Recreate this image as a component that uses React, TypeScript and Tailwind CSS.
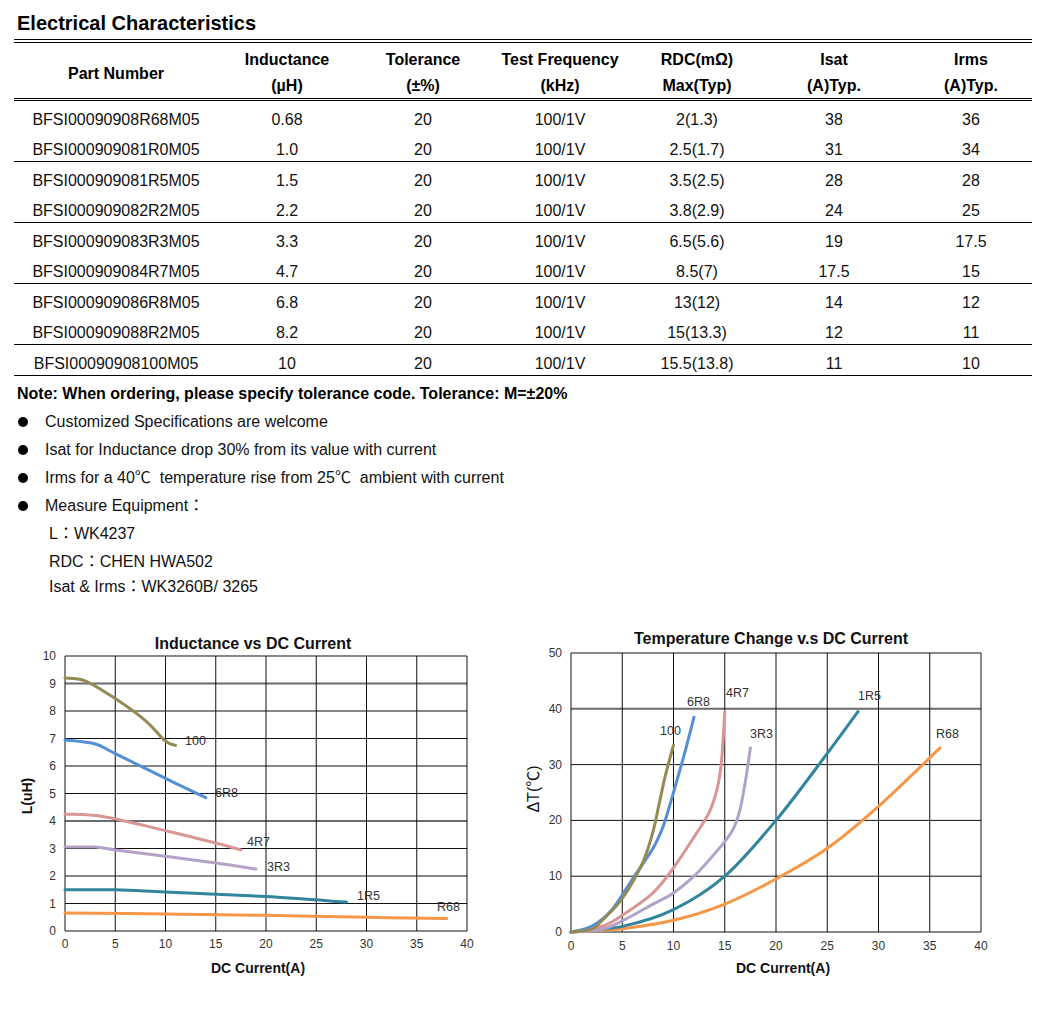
import React from 'react';

type Pt = [number, number];
type Series = { color: string; pts: Pt[]; label: string; lx: number; ly: number };

const rows = [
  ['BFSI00090908R68M05', '0.68', '20', '100/1V', '2(1.3)', '38', '36'],
  ['BFSI000909081R0M05', '1.0', '20', '100/1V', '2.5(1.7)', '31', '34'],
  ['BFSI000909081R5M05', '1.5', '20', '100/1V', '3.5(2.5)', '28', '28'],
  ['BFSI000909082R2M05', '2.2', '20', '100/1V', '3.8(2.9)', '24', '25'],
  ['BFSI000909083R3M05', '3.3', '20', '100/1V', '6.5(5.6)', '19', '17.5'],
  ['BFSI000909084R7M05', '4.7', '20', '100/1V', '8.5(7)', '17.5', '15'],
  ['BFSI000909086R8M05', '6.8', '20', '100/1V', '13(12)', '14', '12'],
  ['BFSI000909088R2M05', '8.2', '20', '100/1V', '15(13.3)', '12', '11'],
  ['BFSI00090908100M05', '10', '20', '100/1V', '15.5(13.8)', '11', '10'],
];

const gridCols = 'grid grid-cols-[204px_138px_134px_140px_134px_140px_128px]';

// inductance vs current
const lSeries: Series[] = [
  { color: '#948a54', label: '100', lx: 185, ly: 117, pts: [[0, 9.2], [2, 9.1], [5, 8.45], [8, 7.65], [10, 6.9], [11, 6.75]] },
  { color: '#558ed5', label: '6R8', lx: 215, ly: 169, pts: [[0, 6.95], [3, 6.8], [5, 6.45], [10, 5.55], [14, 4.85]] },
  { color: '#d99694', label: '4R7', lx: 247, ly: 218, pts: [[0, 4.25], [4, 4.15], [10, 3.65], [15, 3.2], [17.5, 2.95]] },
  { color: '#b3a2c7', label: '3R3', lx: 267, ly: 243, pts: [[0, 3.05], [3, 3.05], [5, 2.95], [10, 2.72], [15, 2.47], [19, 2.25]] },
  { color: '#31859c', label: '1R5', lx: 357, ly: 272, pts: [[0, 1.5], [5, 1.5], [10, 1.42], [20, 1.25], [28, 1.05]] },
  { color: '#f79646', label: 'R68', lx: 437, ly: 283, pts: [[0, 0.65], [10, 0.62], [20, 0.57], [30, 0.5], [38, 0.45]] },
];

// temperature rise vs current
const tSeries: Series[] = [
  { color: '#f79646', label: 'R68', lx: 436, ly: 110, pts: [[0, 0], [5, 0.6], [10, 2.1], [15, 5], [20, 9.5], [25, 15], [30, 22.5], [36, 33]] },
  { color: '#31859c', label: '1R5', lx: 358, ly: 72, pts: [[0, 0], [5, 1], [10, 4], [15, 10], [20, 20], [25, 32], [28, 39.5]] },
  { color: '#b3a2c7', label: '3R3', lx: 250, ly: 110, pts: [[0, 0], [3, 0.5], [5, 2], [8, 5], [10, 7], [12, 10], [14, 14], [15.7, 18], [16.5, 22], [17.1, 28], [17.5, 33]] },
  { color: '#d99694', label: '4R7', lx: 226, ly: 69, pts: [[0, 0], [3, 1], [5, 3], [8, 7], [10, 11.5], [12, 17], [13.5, 21.5], [14.3, 26], [14.7, 31], [15, 39.5]] },
  { color: '#558ed5', label: '6R8', lx: 187, ly: 78, pts: [[0, 0], [2, 1], [4, 4], [6, 9.5], [8, 15], [9, 19], [10, 25], [11, 31.5], [12, 38.5]] },
  { color: '#948a54', label: '100', lx: 160, ly: 107, pts: [[0, 0], [2, 0.5], [3, 2], [5, 6], [7, 12.5], [8, 18], [8.6, 23], [9.2, 28], [10, 33.5]] },
];

function smooth(p: Pt[]) {
  let d = `M${p[0][0].toFixed(1)},${p[0][1].toFixed(1)}`;
  for (let i = 0; i < p.length - 1; i++) {
    const a = p[i - 1] || p[i];
    const b = p[i];
    const c = p[i + 1];
    const e = p[i + 2] || c;
    const c1x = b[0] + (c[0] - a[0]) / 6;
    const c1y = b[1] + (c[1] - a[1]) / 6;
    const c2x = c[0] - (e[0] - b[0]) / 6;
    const c2y = c[1] - (e[1] - b[1]) / 6;
    d += ` C${c1x.toFixed(1)},${c1y.toFixed(1)} ${c2x.toFixed(1)},${c2y.toFixed(1)} ${c[0].toFixed(1)},${c[1].toFixed(1)}`;
  }
  return d;
}

function Chart(props: {
  width: number;
  x0: number; y0: number; x1: number; y1: number;
  yMax: number; yStep: number; grayRows: number[];
  title: string; tx: number; ty: number;
  yLabel: string; ylx: number; yly: number; yBold: boolean;
  xlx: number; yTickX: number; xTickY: number;
  series: Series[];
}) {
  const { x0, y0, x1, y1, yMax, yStep } = props;
  const sx = (v: number) => x0 + (v / 40) * (x1 - x0);
  const sy = (v: number) => y1 - (v / yMax) * (y1 - y0);
  const xs = [0, 5, 10, 15, 20, 25, 30, 35, 40];
  const ys: number[] = [];
  for (let v = 0; v <= yMax; v += yStep) ys.push(v);

  return (
    <svg width={props.width} height={375} className="block shrink-0">
      <text x={props.tx} y={props.ty} textAnchor="middle" dominantBaseline="central" fontSize="16" fontWeight="700" fill="#111">
        {props.title}
      </text>
      {ys.map((v) => (
        <line key={'h' + v} x1={x0} x2={x1} y1={sy(v)} y2={sy(v)}
          stroke={props.grayRows.includes(v) ? '#6b6b6b' : '#111'}
          strokeWidth={props.grayRows.includes(v) ? 2 : 1} />
      ))}
      {xs.map((v) => (
        <line key={'v' + v} x1={sx(v)} x2={sx(v)} y1={y0} y2={y1} stroke="#111" strokeWidth={1} />
      ))}
      {ys.map((v) => (
        <text key={'yt' + v} x={props.yTickX} y={sy(v)} textAnchor="end" dominantBaseline="central" fontSize="12" fill="#333">
          {v}
        </text>
      ))}
      {xs.map((v) => (
        <text key={'xt' + v} x={sx(v)} y={props.xTickY} textAnchor="middle" dominantBaseline="central" fontSize="12" fill="#333">
          {v}
        </text>
      ))}
      {props.series.map((s) => (
        <path key={s.label} d={smooth(s.pts.map(([a, b]) => [sx(a), sy(b)] as Pt))}
          fill="none" stroke={s.color} strokeWidth={3} strokeLinecap="round" />
      ))}
      {props.series.map((s) => (
        <text key={'l' + s.label} x={s.lx} y={s.ly} dominantBaseline="central" fontSize="12.5" fill="#333">
          {s.label}
        </text>
      ))}
      <text x={props.xlx} y={344} textAnchor="middle" dominantBaseline="central" fontSize="14" fontWeight="700" fill="#111">
        DC Current(A)
      </text>
      <text x={props.ylx} y={props.yly} transform={`rotate(-90 ${props.ylx} ${props.yly})`} textAnchor="middle"
        dominantBaseline="central" fontSize={props.yBold ? 14 : 16} fontWeight={props.yBold ? 700 : 400} fill="#111">
        {props.yLabel}
      </text>
    </svg>
  );
}

const bullets = [
  'Customized Specifications are welcome',
  'Isat for Inductance drop 30% from its value with current',
  'Irms for a 40℃  temperature rise from 25℃  ambient with current',
  'Measure Equipment：',
];

export default function App() {
  return (
    <div className="w-[1050px] h-[1018px] bg-white text-black font-['Liberation_Sans','Noto_Sans_CJK_TC',sans-serif] overflow-hidden">
      {/* title */}
      <h1 className="pl-[17px] pt-[11px] text-[20px] leading-[24px] font-bold">Electrical Characteristics</h1>

      {/* table */}
      <div className="ml-[14px] mt-[4px] w-[1018px] border-t-4 border-double border-black text-[16px]">
        <div className={`${gridCols} h-[58px] border-b-[3px] border-double border-black font-bold text-center`}>
          <div className="pt-[6px] flex items-center justify-center">Part Number</div>
          <div className="pt-[4px] leading-[26px]">Inductance<br />(µH)</div>
          <div className="pt-[4px] leading-[26px]">Tolerance<br />(±%)</div>
          <div className="pt-[4px] leading-[26px]">Test Frequency<br />(kHz)</div>
          <div className="pt-[4px] leading-[26px]">RDC(mΩ)<br />Max(Typ)</div>
          <div className="pt-[4px] leading-[26px]">Isat<br />(A)Typ.</div>
          <div className="pt-[4px] pl-[6px] leading-[26px]">Irms<br />(A)Typ.</div>
        </div>
        {rows.map((r, i) => (
          <div key={r[0]} className={`${gridCols} text-center text-[#111] ${i % 2 === 1 || i === rows.length - 1 ? 'border-b border-black' : ''}`}>
            {r.map((c, j) => (
              <div key={j} className={`pt-[7px] pb-[-1px] leading-[23px] ${j === 6 ? 'pl-[6px]' : ''}`}>{c}</div>
            ))}
          </div>
        ))}
      </div>

      {/* notes */}
      <p className="pl-[17px] mt-[6px] text-[16px] leading-[24px] font-bold">
        Note: When ordering, please specify tolerance code. Tolerance: M=±20%
      </p>
      <ul className="mt-[2px] text-[16px] leading-[28px] text-[#111]">
        {bullets.map((b) => (
          <li key={b} className="flex items-center">
            <span className="ml-[18px] w-[10px] h-[10px] rounded-full bg-black" />
            <span className="ml-[17px] whitespace-pre">{b}</span>
          </li>
        ))}
      </ul>
      <div className="pl-[49px] text-[16px] text-[#111]">
        <div className="leading-[28px]">L：WK4237</div>
        <div className="leading-[28px]">RDC：CHEN HWA502</div>
        <div className="leading-[22px]">Isat &amp; Irms：WK3260B/ 3265</div>
      </div>

      {/* charts */}
      <div className="mt-[26px] flex">
        <Chart width={500} x0={65} y0={32} x1={467} y1={307} yMax={10} yStep={1} grayRows={[4, 9]}
          title="Inductance vs DC Current" tx={253} ty={19}
          yLabel="L(uH)" ylx={27} yly={172} yBold
          xlx={258} yTickX={56} xTickY={320} series={lSeries} />
        <Chart width={550} x0={71} y0={29} x1={481} y1={308} yMax={50} yStep={10} grayRows={[40]}
          title="Temperature Change v.s DC Current" tx={271} ty={14}
          yLabel="ΔT(℃)" ylx={33} yly={165} yBold={false}
          xlx={283} yTickX={62} xTickY={322} series={tSeries} />
      </div>
    </div>
  );
}
